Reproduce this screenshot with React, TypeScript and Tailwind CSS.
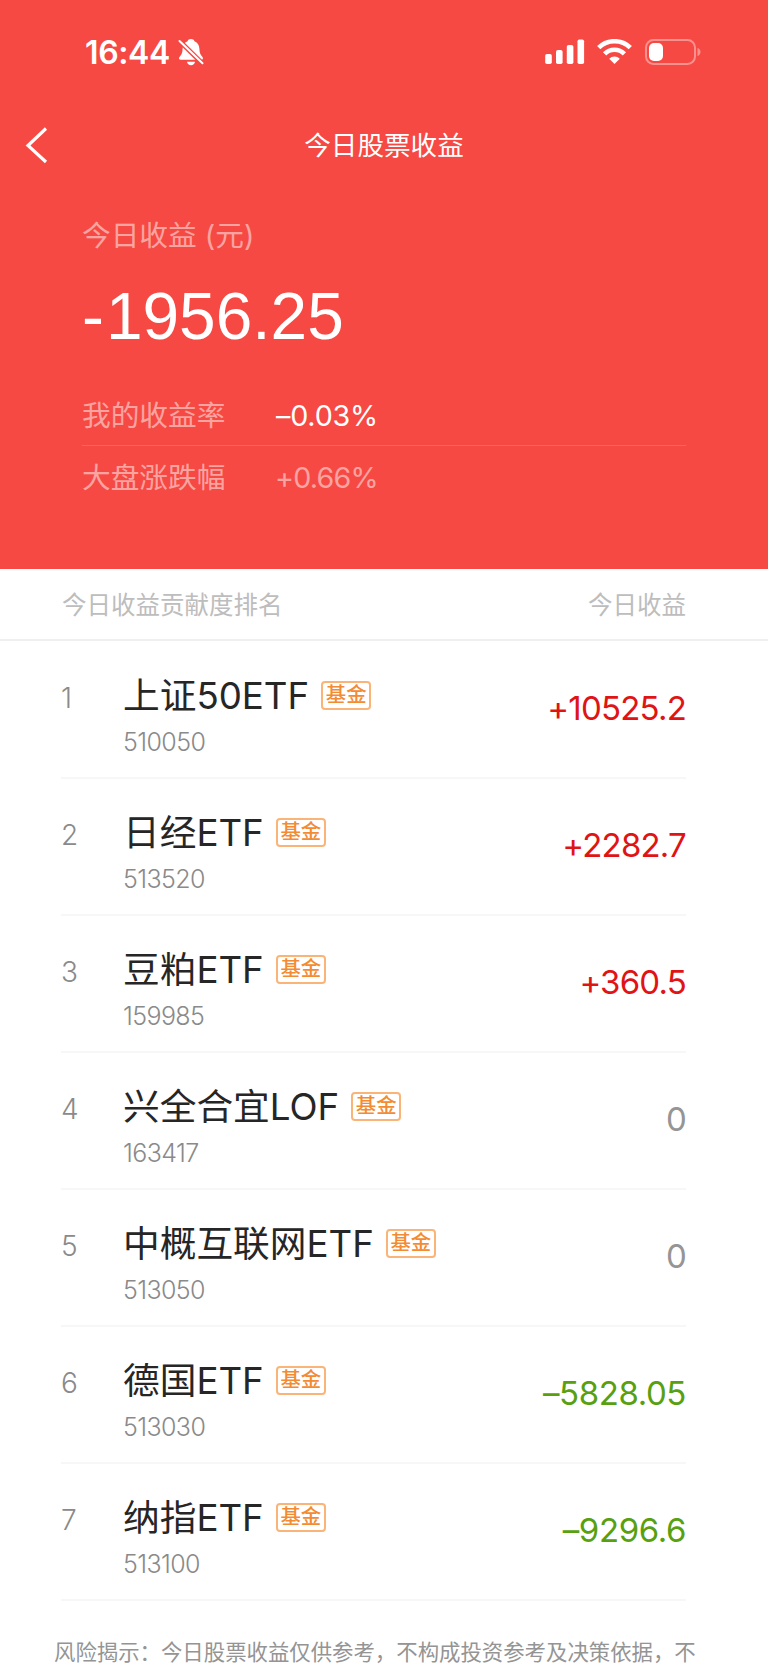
type Holding = {
  name: string;
  code: string;
  profit: string;
};

const holdings: Holding[] = [
  { name: '上证50ETF', code: '510050', profit: '+10525.2' },
  { name: '日经ETF', code: '513520', profit: '+2282.7' },
  { name: '豆粕ETF', code: '159985', profit: '+360.5' },
  { name: '兴全合宜LOF', code: '163417', profit: '0' },
  { name: '中概互联网ETF', code: '513050', profit: '0' },
  { name: '德国ETF', code: '513030', profit: '–5828.05' },
  { name: '纳指ETF', code: '513100', profit: '–9296.6' },
];

function profitColor(profit: string) {
  if (profit.startsWith('+')) return 'text-[#e01414] tracking-[-0.8px]';
  if (profit.startsWith('–')) return 'text-[#58a010] tracking-[-0.4px]';
  return 'text-[#959595] tracking-[-0.8px]';
}

function BellOffIcon() {
  return (
    <svg width="26" height="28" viewBox="0 0 26 28" fill="none">
      <path
        d="M13 1c1.700 0 3 .9 3.500 2.300 3.300 1.200 4.700 4 4.900 7.500.2 4.500 1.200 6.200 2.900 8 1.300 1.400.7 3-1 3H2.700c-1.700 0-2.300-1.600-1-3 1.700-1.800 2.700-3.500 2.900-8 .2-3.500 1.600-6.300 4.900-7.500C10 1.900 11.300 1 13 1z"
        fill="#fff"
      />
      <path d="M9 23.700h8c-.4 2.200-1.900 3.500-4 3.500s-3.600-1.300-4-3.500z" fill="#fff" />
      <path d="M0 1.500 26 27" stroke="#f64943" strokeWidth="4.800" />
      <path d="M1.500 3 24.500 25.300" stroke="#fff" strokeWidth="2" strokeLinecap="round" />
    </svg>
  );
}

function SignalIcon() {
  return (
    <svg width="40" height="26" viewBox="0 0 40 26" fill="#fff">
      <rect x="0.200" y="15" width="6.600" height="10" rx="1.800" />
      <rect x="11" y="11" width="6.600" height="14" rx="1.800" />
      <rect x="21.800" y="6" width="6.600" height="19" rx="1.800" />
      <rect x="32.500" y="0.500" width="6.600" height="24.500" rx="1.800" />
    </svg>
  );
}

function WifiIcon() {
  return (
    <svg width="35" height="26" viewBox="0 0 35 26" fill="none" stroke="#fff" strokeWidth="4.600">
      <path d="M1.700 8.700a22.500 22.500 0 0 1 31.600 0" />
      <path d="M7.600 14.800a14 14 0 0 1 19.800 0" />
      <path d="M17.500 25l-5.300-5.300a7.600 7.600 0 0 1 10.600 0z" fill="#fff" stroke="none" />
    </svg>
  );
}

function BatteryIcon() {
  return (
    <svg width="56" height="26" viewBox="0 0 56 26" fill="none">
      <rect x="1" y="1" width="49" height="24" rx="7.500" stroke="#fff" strokeOpacity="0.400" strokeWidth="2" />
      <rect x="4" y="4" width="14" height="18" rx="5" fill="#fff" />
      <path d="M52.500 8.800c1.800.7 3 2.300 3 4.200s-1.200 3.500-3 4.200z" fill="#fff" fillOpacity="0.400" />
    </svg>
  );
}

function StatusBar() {
  return (
    <div className="flex h-[103px] items-start justify-between pt-[38px] pr-[67px] pl-[85px]">
      <div className="flex items-center gap-[8px]">
        <span className="text-[32px] leading-[27px] font-semibold tracking-[-0.4px]">16:44</span>
        <BellOffIcon />
      </div>
      <div className="flex items-center pt-px">
        <SignalIcon />
        <div className="ml-[12px]">
          <WifiIcon />
        </div>
        <div className="ml-[13px]">
          <BatteryIcon />
        </div>
      </div>
    </div>
  );
}

function Summary() {
  return (
    <header className="h-[569px] bg-[#f64943] text-white">
      <StatusBar />

      {/* Nav bar */}
      <div className="grid h-[84px] grid-cols-[100px_1fr_100px] items-center">
        <svg width="24" height="38" viewBox="0 0 24 38" fill="none" className="ml-[24px]">
          <path d="M22 2.500 4 19.500l18 16.500" stroke="#fff" strokeWidth="3.200" />
        </svg>
        <h1 className="text-center text-[26.600px] leading-[36px] font-normal">今日股票收益</h1>
      </div>

      <div className="mr-[82px] ml-[82px] pt-[31px]">
        <p className="text-[28.700px] leading-[36px] font-[380] text-white/50">今日收益 (元)</p>
        <p className="mt-[26px] font-[Liberation_Sans] text-[65.800px] leading-[72px]">
          <span className="mr-[2px]">-</span>1956.25
        </p>
        <div className="mt-[37px] flex h-[57px] items-center border-b border-white/15 pb-[2px] text-[28.700px] font-[380]">
          <span className="w-[194px] text-white/50">我的收益率</span>
          <span className="tracking-[-0.2px]">–0.03%</span>
        </div>
        <div className="flex h-[63px] items-center text-[28.700px] font-[380] text-white/50">
          <span className="w-[193px]">大盘涨跌幅</span>
          <span className="tracking-[-0.8px]">+0.66%</span>
        </div>
      </div>
    </header>
  );
}

function HoldingRow({ rank, item }: { rank: number; item: Holding }) {
  return (
    <li className="flex h-[137px] border-b-2 border-[#f7f7f7]">
      <span className="w-[62px] pt-[38px] text-[28px] leading-[36px] font-light text-[#8a8a8a]">{rank}</span>
      <div className="flex-1 pt-[31px]">
        <div className="flex items-center">
          <span className="text-[36.700px] leading-[46px] font-[380] text-[#262626]">{item.name}</span>
          <span className="mb-[2px] ml-[12px] flex h-[29px] w-[50px] items-center justify-center rounded-[4px] border-2 border-[#fbb478] text-[20.400px] leading-none font-medium text-[#f38b33]">
            基金
          </span>
        </div>
        <div className="mt-[7px] text-[25px] leading-[32px] font-light tracking-[-0.6px] text-[#8a8a8a]">{item.code}</div>
      </div>
      <span className={`pt-[45px] text-[33px] leading-[42px] font-[380] ${profitColor(item.profit)}`}>{item.profit}</span>
    </li>
  );
}

export default function App() {
  return (
    <div className="h-[1665px] w-[768px] overflow-hidden bg-white font-[Inter,'Noto_Sans_CJK_SC',sans-serif]">
      <Summary />

      {/* Ranking header */}
      <div className="flex h-[72px] items-center justify-between border-b-2 border-[#efefef] pt-[2px] pr-[82px] pl-[62px] text-[24.500px] font-[380] text-[#bdbdbd]">
        <span>今日收益贡献度排名</span>
        <span>今日收益</span>
      </div>

      <ul className="mt-px mr-[82px] ml-[61px]">
        {holdings.map((item, i) => (
          <HoldingRow key={item.code} rank={i + 1} item={item} />
        ))}
      </ul>

      <p className="pt-[35px] pl-[54px] text-[21.400px] leading-[32px] font-[380] whitespace-nowrap text-[#949494]">
        风险揭示：今日股票收益仅供参考，不构成投资参考及决策依据，不
      </p>
    </div>
  );
}
